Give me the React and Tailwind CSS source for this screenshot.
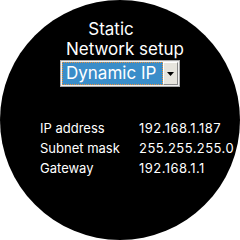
import React from "react";

const rows = [
  ["IP address", "192.168.1.187"],
  ["Subnet mask", "255.255.255.0"],
  ["Gateway", "192.168.1.1"],
];

export default function App() {
  return (
    <div className="w-[240px] h-[240px] bg-white">
      <div
        className="w-[240px] h-[240px] rounded-full bg-black text-white flex flex-col items-center"
        style={{ fontFamily: "Inter, 'Noto Sans', sans-serif" }}
      >
        {/* Title */}
        <div className="pt-[19px] text-[17px] leading-[20px] text-center">
          <div className="pr-[18px]">Static</div>
          <div className="pl-[10px]">Network setup</div>
        </div>

        {/* Select */}
        <div className="mt-[1px] w-[120px] h-[27px] border border-[#a8a8a8] bg-[#f0f0f0] p-px flex">
          <div className="flex-1 bg-[#3a8dc9] border border-dotted border-[#e8913a] flex items-center pl-[3px] text-[17px] leading-none">
            Dynamic IP
          </div>
          <div className="w-[15px] bg-[#e6e4dd] border-t border-l border-white border-r border-b border-r-[#8a8a8a] border-b-[#8a8a8a] flex items-center justify-center">
            <svg width="7" height="4" viewBox="0 0 7 4">
              <path d="M0 0H7L3.5 4Z" fill="#000" />
            </svg>
          </div>
        </div>

        {/* Settings */}
        <div className="mt-[31px] self-start ml-[40px] text-[13px] leading-[20px]">
          {rows.map(([k, v]) => (
            <div key={k} className="flex">
              <span className="w-[99px] shrink-0">{k}</span>
              <span className="tracking-[0.45px] whitespace-nowrap">{v}</span>
            </div>
          ))}
        </div>
      </div>
    </div>
  );
}
